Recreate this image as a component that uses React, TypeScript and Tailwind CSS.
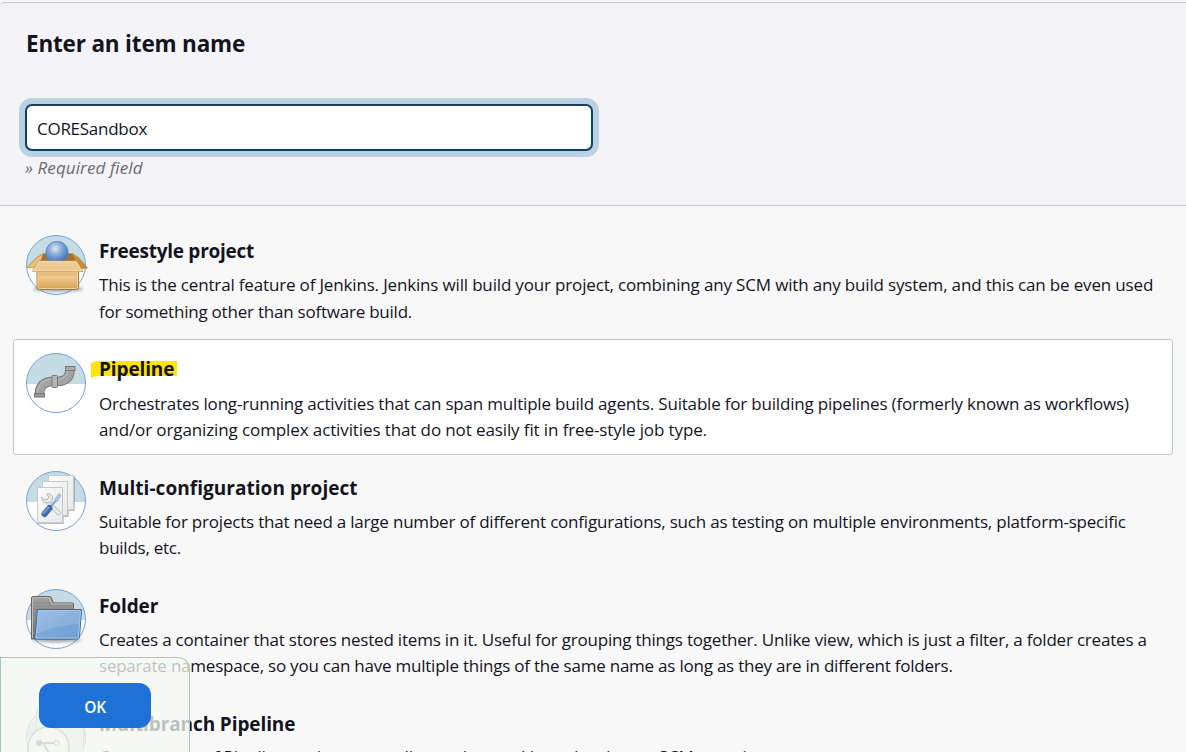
import type { ReactNode } from 'react';

function IconDisc({ id, children }: { id: string; children: ReactNode }) {
  return (
    <svg viewBox="0 0 66 66" className="-m-[3px] h-[66px] w-[66px] shrink-0" fill="none">
      <defs>
        <clipPath id={id + '-clip'}>
          <circle cx="33" cy="33" r="29.5" />
        </clipPath>
      </defs>
      <g clipPath={`url(#${id}-clip)`}>
        <rect width="66" height="34" fill="#c6dce4" />
        <rect y="34" width="66" height="32" fill="#fff" />
      </g>
      <circle cx="33" cy="33" r="29.5" stroke="#75a3d9" strokeWidth="1" />
      {children}
    </svg>
  );
}

function FreestyleIcon() {
  return (
    <IconDisc id="free">
      <defs>
        <radialGradient id="ball" cx="0.42" cy="0.33" r="0.65">
          <stop offset="0" stopColor="#e3ebe8" />
          <stop offset="0.4" stopColor="#8db0dc" />
          <stop offset="1" stopColor="#3c70b8" />
        </radialGradient>
        <linearGradient id="box" x1="0" y1="0" x2="0" y2="1">
          <stop offset="0" stopColor="#d9a65c" />
          <stop offset="0.4" stopColor="#efc98e" />
          <stop offset="1" stopColor="#d69f50" />
        </linearGradient>
        <linearGradient id="flap" x1="0" y1="0" x2="0" y2="1">
          <stop offset="0" stopColor="#f0cf98" />
          <stop offset="1" stopColor="#e9c58c" />
        </linearGradient>
        <filter id="shade" x="-20%" y="-100%" width="140%" height="300%">
          <feGaussianBlur stdDeviation="1.6" />
        </filter>
      </defs>
      <ellipse cx="35" cy="57" rx="25" ry="3" fill="#777" opacity="0.6" filter="url(#shade)" />
      <path d="M20 21.500h30l4 10H15z" fill="#a5702c" />
      <path d="M20.500 21.500L13 26 4 35.500l6 .5 8-8z" fill="#e7bf80" stroke="#b98538" strokeWidth=".8" />
      <path d="M49 21.500L56 26l8.500 10-6 .5-5-7z" fill="#c98d38" stroke="#b98538" strokeWidth=".8" />
      <circle cx="34" cy="20.500" r="11.200" fill="url(#ball)" stroke="#588bc9" strokeWidth=".8" />
      <path d="M14 37h41.500v18.500q0 2-2 2H16q-2 0-2-2z" fill="url(#box)" stroke="#b0772c" />
      <path d="M15 40h39.500v15q0 1.500-1.500 1.500H16.500q-1.500 0-1.500-1.500z" stroke="#f4d7a5" strokeWidth=".8" />
      <path d="M15.500 29h38l6.500 10.500H9.500z" fill="url(#flap)" stroke="#c99a55" strokeWidth=".8" />
      <path d="M16 29.800h37l5.500 8.900H11z" stroke="#f8e3bb" strokeWidth=".8" />
    </IconDisc>
  );
}

function PipelineIcon() {
  return (
    <IconDisc id="pipe">
      <path d="M16.500 44C16.500 36 21 32 28 31.500h7C43 31 47 27 47 19" stroke="#777" strokeWidth="9.600" />
      <path d="M16.500 44C16.500 36 21 32 28 31.500h7C43 31 47 27 47 19" stroke="#a3a3a3" strokeWidth="7.600" />
      <path d="M14.500 43C15 35 20 30 28 29.500h7C41 29 45 25 45 20" stroke="#b5b5b5" strokeWidth="1.500" />
      <rect x="29" y="25.500" width="5.500" height="12" rx="1" fill="#b4b4b4" stroke="#777" />
      <rect x="42.500" y="16.500" width="9.500" height="4" fill="#adadad" stroke="#777" />
      <rect x="11.500" y="43.500" width="10" height="3.500" fill="#999" stroke="#777" />
    </IconDisc>
  );
}

function MatrixIcon() {
  return (
    <IconDisc id="matrix">
      <defs>
        <linearGradient id="page" x1="0" y1="0" x2="1" y2="1">
          <stop offset="0" stopColor="#fcfcfc" />
          <stop offset="1" stopColor="#e7e8e8" />
        </linearGradient>
        <filter id="pageShade" x="-20%" y="-20%" width="150%" height="150%">
          <feDropShadow dx=".8" dy="1" stdDeviation=".7" floodOpacity=".25" />
        </filter>
      </defs>
      <g fill="url(#page)" stroke="#c6cacc" filter="url(#pageShade)">
        <rect x="25.500" y="7.500" width="25" height="34" />
        <rect x="19.500" y="13.500" width="25" height="34" />
        <rect x="14.500" y="19.500" width="25" height="35" />
      </g>
      <path d="M24 33L35.500 45" stroke="#b4b8ba" strokeWidth="4.500" strokeLinecap="round" />
      <path d="M24 33L35.500 45" stroke="#e8eaeb" strokeWidth="3" strokeLinecap="round" />
      <path d="M18.500 29q0 6 6 6t5-6Q28 25 23.500 26l2.500 3-2.500 3-3-.5z" fill="#e8eaeb" stroke="#b4b8ba" />
      <path d="M28 38l6-6.500" stroke="#8ba5c8" strokeWidth="2" />
      <path d="M32 31.500l4-6 2 2-4 6z" fill="#b4cae5" stroke="#86a3c9" strokeWidth=".8" />
      <path d="M21.500 46l5-6" stroke="#3c6aa8" strokeWidth="6" strokeLinecap="round" />
      <path d="M20.500 45.500l5-6" stroke="#6f9bd1" strokeWidth="2" strokeLinecap="round" />
    </IconDisc>
  );
}

function FolderIcon() {
  return (
    <IconDisc id="folder">
      <defs>
        <linearGradient id="back" x1="0" y1="0" x2="0" y2="1">
          <stop offset="0" stopColor="#a2a2a0" />
          <stop offset="1" stopColor="#71716f" />
        </linearGradient>
        <linearGradient id="front" x1="0" y1="0" x2="1" y2="1">
          <stop offset="0" stopColor="#95b9e2" />
          <stop offset="0.5" stopColor="#7ba7d9" />
          <stop offset="1" stopColor="#709fd4" />
        </linearGradient>
        <filter id="folderShade" x="-20%" y="-100%" width="140%" height="300%">
          <feGaussianBlur stdDeviation="1.400" />
        </filter>
      </defs>
      <ellipse cx="34" cy="54" rx="24" ry="2.500" fill="#555" opacity=".5" filter="url(#folderShade)" />
      <path d="M8.500 53V12q0-1.500 1.500-1.500h16.500q1.500 0 2 1.500l2 5h18.500q1.500 0 1.500 1.500V53z" fill="url(#back)" stroke="#636361" />
      <path d="M9.500 52V12q0-.5.500-.5h16l3 6.500h20" stroke="#bcbcba" />
      <g stroke="#858583" strokeWidth=".6">
        <path d="M10 17h18M10 20h39M10 23h39M10 26h5M10 29h5M10 32h5M10 35h5M10 38h5M10 41h5M10 44h4M10 47h4" />
      </g>
      <path d="M14.500 23.500H58.500L56.500 51.500q-.5 1.500-2 1.500H12.500q-1 0-1-1l1-4z" fill="url(#front)" stroke="#3868a7" />
      <path d="M15.500 24.500h41.900L55.500 51q0 1-1 1H13z" stroke="#a6c5e8" />
      <path d="M16 25h41l-1 13q-22 1-42 10z" fill="#fff" opacity=".12" />
    </IconDisc>
  );
}

function MultibranchIcon() {
  return (
    <IconDisc id="branch">
      <path d="M13.500 5.500h29v12h18v40h-47z" fill="#dbe5df" stroke="#a9b9ac" />
      <circle cx="25.500" cy="43.500" r="20.500" fill="#f0f0ec" stroke="#8c8c8c" strokeWidth="1.500" />
      <path d="M16 39h17M20 39l8 13" stroke="#888" strokeWidth="2" />
      <circle cx="16" cy="39" r="3" fill="#777" />
      <circle cx="33.500" cy="39" r="2.500" fill="#eee" stroke="#777" />
    </IconDisc>
  );
}

type Line = { text: string; spacing: string };
type Item = { title: string; titleStyle: string; bodyStyle: string; icon: ReactNode; lines: Line[]; selected?: boolean };

const items: Item[] = [
  {
    title: 'Freestyle project',
    titleStyle: 'pt-[2px] tracking-[-0.26px]',
    bodyStyle: 'mt-[8px]',
    icon: <FreestyleIcon />,
    lines: [
      { text: 'This is the central feature of Jenkins. Jenkins will build your project, combining any SCM with any build system, and this can be even used', spacing: 'h-[27px] tracking-[-0.166px]' },
      { text: 'for something other than software build.', spacing: 'tracking-[-0.225px]' },
    ],
  },
  {
    title: 'Pipeline',
    titleStyle: 'pt-[2px] tracking-[-0.12px]',
    bodyStyle: 'mt-[9px]',
    icon: <PipelineIcon />,
    selected: true,
    lines: [
      { text: 'Orchestrates long-running activities that can span multiple build agents. Suitable for building pipelines (formerly known as workflows)', spacing: 'tracking-[-0.19px]' },
      { text: 'and/or organizing complex activities that do not easily fit in free-style job type.', spacing: 'tracking-[-0.11px]' },
    ],
  },
  {
    title: 'Multi-configuration project',
    titleStyle: 'pt-[3px] tracking-[0.04px]',
    bodyStyle: 'mt-[8px]',
    icon: <MatrixIcon />,
    lines: [
      { text: 'Suitable for projects that need a large number of different configurations, such as testing on multiple environments, platform-specific', spacing: 'tracking-[-0.205px]' },
      { text: 'builds, etc.', spacing: 'tracking-[-0.25px]' },
    ],
  },
  {
    title: 'Folder',
    titleStyle: 'pt-[3px] tracking-[-0.1px]',
    bodyStyle: 'mt-[8px]',
    icon: <FolderIcon />,
    lines: [
      { text: 'Creates a container that stores nested items in it. Useful for grouping things together. Unlike view, which is just a filter, a folder creates a', spacing: 'tracking-[-0.205px]' },
      { text: 'separate namespace, so you can have multiple things of the same name as long as they are in different folders.', spacing: 'tracking-[-0.225px]' },
    ],
  },
  {
    title: 'Multibranch Pipeline',
    titleStyle: 'pt-[3px] tracking-[-0.1px]',
    bodyStyle: 'mt-[7px]',
    icon: <MultibranchIcon />,
    lines: [{ text: 'Creates a set of Pipeline projects according to detected branches in one SCM repository.', spacing: 'tracking-[-0.15px]' }],
  },
];

function ItemRow({ item }: { item: Item }) {
  return (
    <li className={`flex h-[116px] rounded-[3px] border pt-[13px] pl-3 ${item.selected ? 'border-[#c0cacf] bg-white' : 'border-transparent'}`}>
      {item.icon}
      <div className="ml-[13px] pt-px whitespace-nowrap">
        <h3 className={`relative isolate w-fit text-[19px] leading-[26px] font-bold ${item.titleStyle}`}>
          {item.selected && (
            <svg viewBox="0 0 87 18" className="absolute -left-[8px] top-[6px] -z-10 h-[18px] w-[87px]">
              <path d="M0 3q5-2 9-2h77v15H8q-4 0-8 2z" fill="#ffe600" />
            </svg>
          )}
          {item.title}
        </h3>
        <p className={`text-[17px] leading-[26px] ${item.bodyStyle}`}>
          {item.lines.map((line) => (
            <span key={line.text} className={`block w-fit ${line.spacing}`}>{line.text}</span>
          ))}
        </p>
      </div>
    </li>
  );
}

export default function App() {
  return (
    <div className="relative h-[752px] w-[1186px] overflow-hidden bg-[#f8f8f8] pt-[2px] font-['Open_Sans','Noto_Sans',sans-serif] text-[#14141f]">
      <header className="h-[204px] rounded-tl-[5px] border-t border-b border-t-[#bcc8d4] border-b-[#c2ced0] bg-[#f3f3f8] pl-[25px]">
        <h1 className="w-fit pt-[25px] pl-px text-[22.500px] leading-[32px] font-bold tracking-[-0.18px]">Enter an item name</h1>
        <input
          className="mt-[44px] block h-[47px] w-[568px] rounded-[7px] border-2 border-[#0b4264] bg-white px-[10px] pt-px text-[17px] tracking-[-0.27px] shadow-[0_0_0_6px_#b9d1e1] outline-none"
          defaultValue="CORESandbox"
          aria-label="Enter an item name"
        />
        <p className="mt-[4px] w-fit text-[17px] leading-[26px] tracking-[0.1px] text-[#6b6b70] italic">» Required field</p>
      </header>
      <ul className="flex w-[1173px] flex-col gap-[2px] pt-[15px] pl-[13px]">
        {items.map((item) => (
          <ItemRow key={item.title} item={item} />
        ))}
      </ul>
      <div className="absolute bottom-0 left-0 flex h-[95px] w-[190px] items-start rounded-tr-[12px] border-t border-r border-l border-[#a7cbb8] bg-[#f6faf1]/75 pt-[25px] pl-[38px]">
        <button className="h-[45px] w-[112px] rounded-[12px] bg-[#1a6fd6]/98 pt-[5px] text-[15.500px] font-semibold tracking-[-0.2px] text-white">OK</button>
      </div>
    </div>
  );
}
